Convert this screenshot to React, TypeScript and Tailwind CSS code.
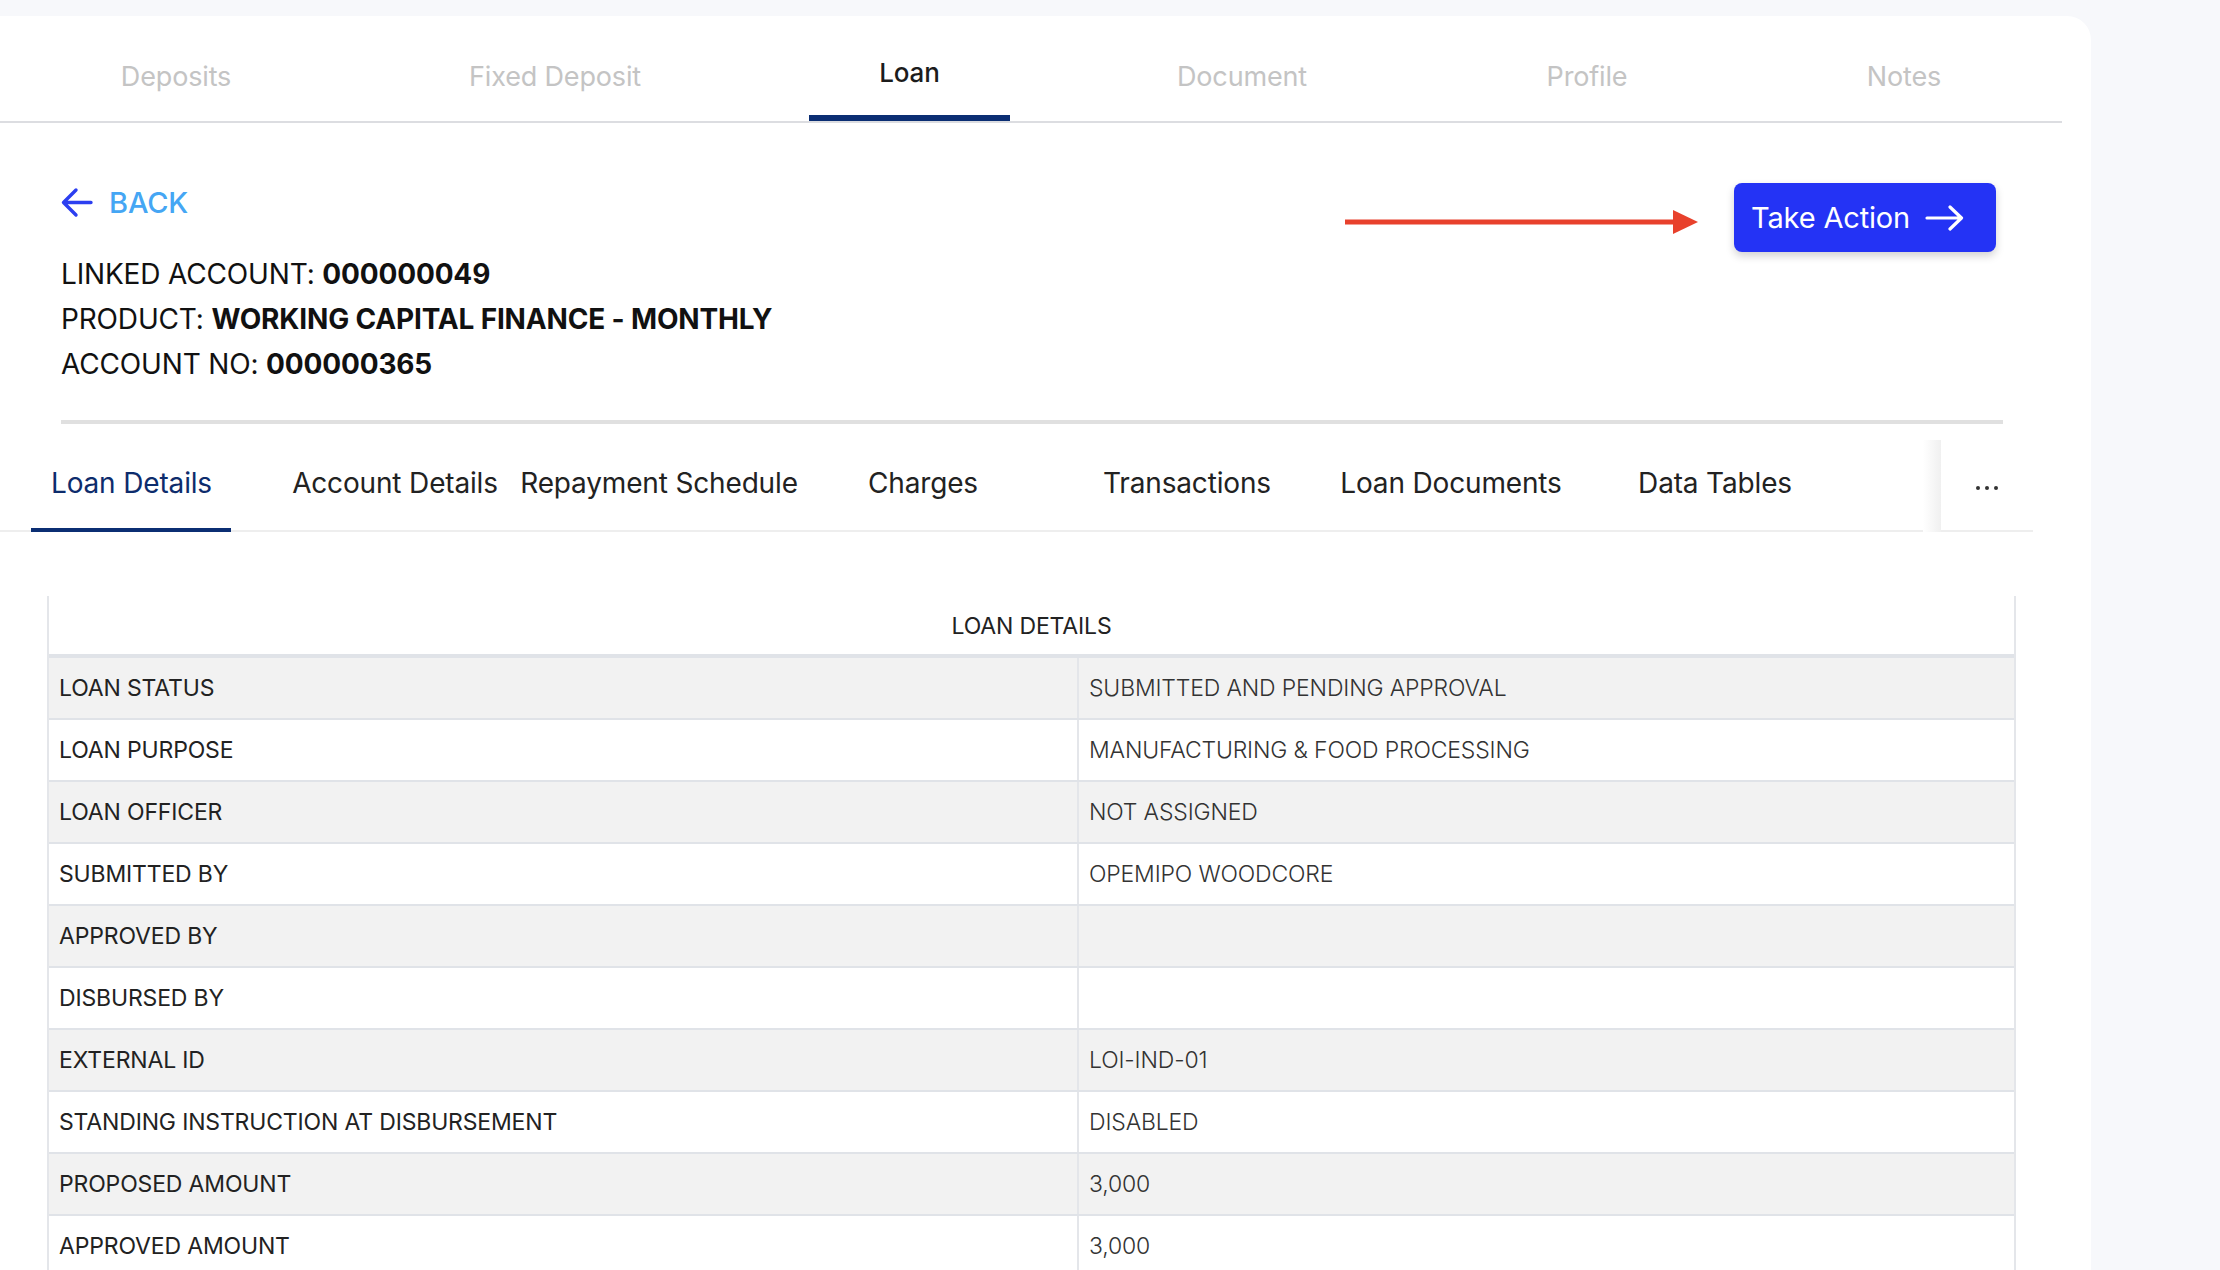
import type { ReactNode } from "react";

const topTabs = [
  { label: "Deposits", cls: "w-[352px]" },
  { label: "Fixed Deposit", cls: "w-[406px]" },
  { label: "Loan", cls: "ml-[51px] w-[201px]", active: true },
  { label: "Document", cls: "w-[464px]" },
  { label: "Profile", cls: "w-[226px]" },
  { label: "Notes", cls: "ml-[46px] w-[316px]" },
];

const subTabs = [
  "Loan Details",
  "Account Details",
  "Repayment Schedule",
  "Charges",
  "Transactions",
  "Loan Documents",
  "Data Tables",
];

const rows: [string, string][] = [
  ["LOAN STATUS", "SUBMITTED AND PENDING APPROVAL"],
  ["LOAN PURPOSE", "MANUFACTURING & FOOD PROCESSING"],
  ["LOAN OFFICER", "NOT ASSIGNED"],
  ["SUBMITTED BY", "OPEMIPO WOODCORE"],
  ["APPROVED BY", ""],
  ["DISBURSED BY", ""],
  ["EXTERNAL ID", "LOI-IND-01"],
  ["STANDING INSTRUCTION AT DISBURSEMENT", "DISABLED"],
  ["PROPOSED AMOUNT", "3,000"],
  ["APPROVED AMOUNT", "3,000"],
];

function TopTabs() {
  return (
    <div className="flex h-[107px] w-[2062px] border-b-2 border-[#dcdde1]">
      {topTabs.map((t) => (
        <div key={t.label} className={`flex h-full flex-col ${t.cls}`}>
          <div
            className={`flex flex-1 justify-center ${
              t.active
                ? "pt-[38px] text-[26px] font-medium text-[#1c1c1c]"
                : "pt-[42px] text-[27px] text-[#c4c4c4]"
            }`}
          >
            <span className="leading-[38px]">{t.label}</span>
          </div>
          <div className={`h-[6px] ${t.active ? "bg-[#0b2e73]" : ""}`} />
        </div>
      ))}
    </div>
  );
}

function InfoLine({ label, value }: { label: string; value: string }) {
  return (
    <div className="text-[28px] leading-[45px] text-[#111]">
      {label} <span className="font-bold">{value}</span>
    </div>
  );
}

function Header() {
  return (
    <section className="pl-[61px] pt-[60px]">
      <div className="flex w-[1935px] items-start justify-between">
        <div className="pt-[3px]">
          <div className="flex h-[32px] items-center gap-[16px]">
            <svg width="32" height="31" viewBox="0 0 32 31" fill="none">
              <path
                d="M30 15.5H3M15 3L2.5 15.5L15 28"
                stroke="#2c3ff0"
                strokeWidth="3.4"
                strokeLinecap="round"
                strokeLinejoin="round"
              />
            </svg>
            <span className="text-[29px] font-medium leading-none text-[#45a6f4]">
              BACK
            </span>
          </div>
          <div className="mt-[34px]">
            <InfoLine label="LINKED ACCOUNT:" value="000000049" />
            <InfoLine label="PRODUCT:" value="WORKING CAPITAL FINANCE - MONTHLY" />
            <InfoLine label="ACCOUNT NO:" value="000000365" />
          </div>
        </div>
        <div className="flex items-start gap-[36px]">
          <svg className="mt-[27px]" width="353" height="24" viewBox="0 0 353 24">
            <rect x="0" y="9.5" width="332" height="5" fill="#e8412c" />
            <path d="M328 0L353 12L328 24Z" fill="#e8412c" />
          </svg>
          <button className="flex h-[69px] w-[262px] items-center gap-[15px] rounded-[8px] bg-[#2433f5] pl-[17px] text-[29px] leading-none text-white shadow-[0_4px_8px_rgba(0,0,0,0.18)]">
            <span>Take Action</span>
            <svg width="39" height="26" viewBox="0 0 39 26" fill="none">
              <path
                d="M2 13H36M25 2L36.5 13L25 24"
                stroke="white"
                strokeWidth="3.2"
                strokeLinecap="round"
                strokeLinejoin="round"
              />
            </svg>
          </button>
        </div>
      </div>
      <div className="mt-[33px] h-[4px] w-[1942px] bg-[#e0e0e0]" />
    </section>
  );
}

function SubTabs() {
  return (
    <div className="flex h-[108px] w-[2033px] border-b-2 border-[#eeeeee]">
      {subTabs.map((t, i) => (
        <div
          key={t}
          className={`flex h-full shrink-0 flex-col ${i === 0 ? "w-[263px]" : "w-[264px]"}`}
        >
          <div
            className={`flex flex-1 justify-center whitespace-nowrap pt-[14px] text-[28px] ${
              i === 0 ? "text-[#0d2c6c]" : "text-[#222]"
            }`}
          >
            <span className="leading-[90px]">{t}</span>
          </div>
          <div
            className={`relative -mb-[2px] ml-[31px] mr-[32px] h-[4px] ${
              i === 0 ? "bg-[#0b2e73]" : ""
            }`}
          />
        </div>
      ))}
      <div className="flex flex-1 justify-end">
        <div className="mt-[16px] h-[92px] w-[18px] bg-gradient-to-r from-white to-[#f0f0f0]" />
      </div>
      <div className="flex w-[92px] items-center justify-center gap-[5px] pt-[22px]">
        <span className="h-[4px] w-[4px] rounded-full bg-[#333]" />
        <span className="h-[4px] w-[4px] rounded-full bg-[#333]" />
        <span className="h-[4px] w-[4px] rounded-full bg-[#333]" />
      </div>
    </div>
  );
}

function Cell({ children, className }: { children?: ReactNode; className?: string }) {
  return (
    <div className={`flex h-[60px] items-center text-[23px] ${className ?? ""}`}>
      {children}
    </div>
  );
}

function LoanTable() {
  return (
    <div className="ml-[47px] mt-[64px] w-[1969px] border-x-2 border-[#e4e6ea]">
      <div className="flex h-[62px] items-center justify-center border-b-4 border-[#e0e3e8] pt-[2px] text-[23px] text-[#222]">
        LOAN DETAILS
      </div>
      {rows.map(([label, value], i) => (
        <div
          key={label}
          className={`grid grid-cols-[1028px_1fr] border-b-2 border-[#e0e3e8] ${
            i % 2 === 0 ? "bg-[#f2f2f2]" : "bg-white"
          }`}
        >
          <Cell className="pl-[10px] text-[#222]">{label}</Cell>
          <Cell className="border-l-2 border-[#e4e6ea] pl-[10px] font-light text-[#333]">
            {value}
          </Cell>
        </div>
      ))}
    </div>
  );
}

export default function App() {
  return (
    <div className="h-screen overflow-hidden bg-[#f7f8fb] pt-[16px] font-['Inter',sans-serif] tracking-[-0.01em]">
      <div className="h-full w-[2091px] rounded-tr-[24px] bg-white">
        <TopTabs />
        <Header />
        <SubTabs />
        <LoanTable />
      </div>
    </div>
  );
}
